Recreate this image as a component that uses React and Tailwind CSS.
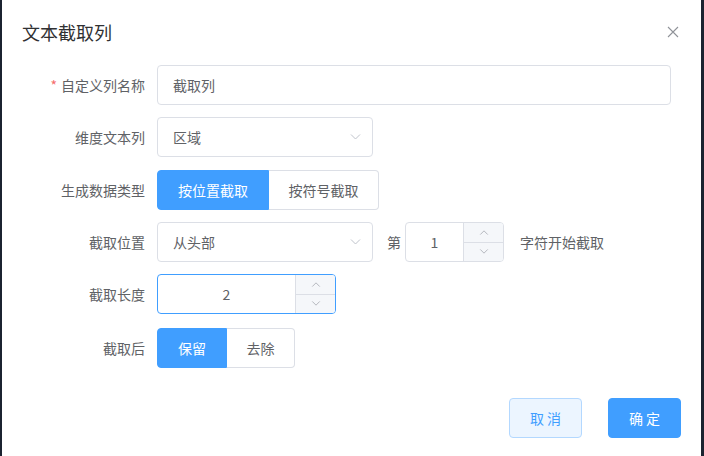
import React from "react";

const font = { fontFamily: '"Noto Sans CJK SC", "Noto Sans", sans-serif' };

function Chevron({ up = false, className = "" }) {
  return (
    <svg viewBox="0 0 12 8" className={className} fill="none" stroke="currentColor" strokeWidth="1">
      {up ? <path d="M1.5 6.5 L6 2 L10.5 6.5" /> : <path d="M1.5 1.5 L6 6 L10.5 1.5" />}
    </svg>
  );
}

function Row({ label, required, className = "", children }) {
  return (
    <div className={`flex items-center h-10 ${className}`}>
      <div className="w-[135px] pr-3 text-right text-sm text-[#606266] shrink-0">
        {required && <span className="text-[#f56c6c] mr-1">*</span>}
        {label}
      </div>
      {children}
    </div>
  );
}

function SelectBox({ value, width }) {
  return (
    <div
      className={`${width} h-10 border border-[#dcdfe6] rounded flex items-center justify-between pl-[15px] pr-[10px] text-sm text-[#606266]`}
    >
      <span>{value}</span>
      <Chevron className="w-[13px] h-[8px] text-[#c0c4cc]" />
    </div>
  );
}

function NumberBox({ value, width, focused }) {
  return (
    <div
      className={`${width} h-10 rounded border flex overflow-hidden ${
        focused ? "border-[#409eff]" : "border-[#dcdfe6]"
      }`}
    >
      <div className="flex-1 flex items-center justify-center text-sm text-[#606266]">{value}</div>
      <div className="w-10 flex flex-col border-l border-[#dcdfe6] bg-[#f5f7fa] text-[#a8abb2]">
        <div className="flex-1 flex items-center justify-center border-b border-[#dcdfe6]">
          <Chevron up className="w-[10px] h-[7px]" />
        </div>
        <div className="flex-1 flex items-center justify-center">
          <Chevron className="w-[10px] h-[7px]" />
        </div>
      </div>
    </div>
  );
}

function Toggle({ options, active, widths }) {
  return (
    <div className="flex h-10 text-sm">
      {options.map((o, i) => (
        <div
          key={o}
          className={`${widths[i]} flex items-center justify-center ${
            i === active
              ? "bg-[#409eff] text-white border border-[#409eff]"
              : "bg-white text-[#606266] border border-[#dcdfe6]"
          } ${i === 0 ? "rounded-l" : "rounded-r border-l-0"}`}
        >
          {o}
        </div>
      ))}
    </div>
  );
}

export default function App() {
  return (
    <div className="w-[704px] h-[456px] bg-[#1b2330] flex overflow-hidden" style={font}>
      <div className="ml-[2px] w-[699px] h-full bg-white flex flex-col">
        {/* header */}
        <div className="flex items-center justify-between pl-5 pr-[22px] pt-5 h-[44px]">
          <h1 className="text-lg text-[#303133] leading-6">文本截取列</h1>
          <svg viewBox="0 0 12 12" className="w-3 h-3 text-[#909399]" stroke="currentColor" strokeWidth="1.1">
            <path d="M1 1 L11 11 M11 1 L1 11" />
          </svg>
        </div>

        {/* form */}
        <div className="pl-5 pr-[30px] pt-[21px] flex flex-col">
          <Row label="自定义列名称" required>
            <div className="flex-1 h-10 border border-[#dcdfe6] rounded flex items-center pl-[15px] text-sm text-[#606266]">
              截取列
            </div>
          </Row>
          <Row label="维度文本列" className="mt-3">
            <SelectBox value="区域" width="w-[216px]" />
          </Row>
          <Row label="生成数据类型" className="mt-[13px]">
            <Toggle options={["按位置截取", "按符号截取"]} active={0} widths={["w-[112px]", "w-[110px]"]} />
          </Row>
          <Row label="截取位置" className="mt-3">
            <SelectBox value="从头部" width="w-[216px]" />
            <span className="ml-[14px] mr-[4px] text-sm text-[#606266]">第</span>
            <NumberBox value="1" width="w-[99px]" />
            <span className="ml-4 text-sm text-[#606266]">字符开始截取</span>
          </Row>
          <Row label="截取长度" className="mt-3">
            <NumberBox value="2" width="w-[179px]" focused />
          </Row>
          <Row label="截取后" className="mt-[14px]">
            <Toggle options={["保留", "去除"]} active={0} widths={["w-[70px]", "w-[68px]"]} />
          </Row>
        </div>

        {/* footer */}
        <div className="flex justify-end gap-[26px] pr-5 mt-[30px]">
          <button className="w-[73px] h-10 rounded border border-[#b3d8ff] bg-[#ecf5ff] text-[#409eff] text-sm">
            取 消
          </button>
          <button className="w-[73px] h-10 rounded border border-[#409eff] bg-[#409eff] text-white text-sm">
            确 定
          </button>
        </div>
      </div>
    </div>
  );
}
